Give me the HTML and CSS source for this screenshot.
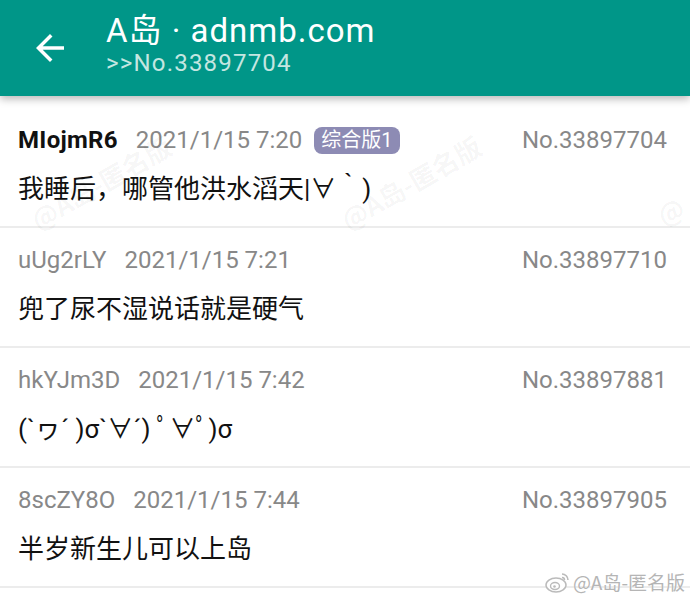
FILE: index.html
```html
<!DOCTYPE html>
<html lang="zh">
<head>
<meta charset="utf-8">
<link rel="stylesheet" href="styles.css">
</head>
<body>
<div class="app">
  <header class="bar">
    <svg class="back" viewBox="0 0 24 24" width="42" height="42"><path fill="#fff" d="M20 11H7.83l5.59-5.59L12 4l-8 8 8 8 1.41-1.41L7.83 13H20v-2z"/></svg>
    <div class="titles">
      <div class="title">A岛 · adnmb.com</div>
      <div class="subtitle">&gt;&gt;No.33897704</div>
    </div>
  </header>
  <main class="list">
    <div class="post">
      <div class="meta">
        <span class="uid po">MIojmR6</span>
        <span class="time">2021/1/15 7:20</span>
        <span class="tag">综合版1</span>
        <span class="no">No.33897704</span>
      </div>
      <div class="content">我睡后，哪管他洪水滔天|∀｀)</div>
    </div>
    <div class="post">
      <div class="meta">
        <span class="uid">uUg2rLY</span>
        <span class="time">2021/1/15 7:21</span>
        <span class="no">No.33897710</span>
      </div>
      <div class="content">兜了尿不湿说话就是硬气</div>
    </div>
    <div class="post">
      <div class="meta">
        <span class="uid">hkYJm3D</span>
        <span class="time">2021/1/15 7:42</span>
        <span class="no">No.33897881</span>
      </div>
      <div class="content">(`ヮ´ )σ`∀´) ﾟ∀ﾟ)σ</div>
    </div>
    <div class="post">
      <div class="meta">
        <span class="uid">8scZY8O</span>
        <span class="time">2021/1/15 7:44</span>
        <span class="no">No.33897905</span>
      </div>
      <div class="content">半岁新生儿可以上岛</div>
    </div>
  </main>
  <span class="wm wm1">@A岛-匿名版</span>
  <span class="wm wm2">@A岛-匿名版</span>
  <span class="wm wm3">@</span>
  <div class="weibo">
    <svg viewBox="0 0 26 22" width="26" height="22"><ellipse cx="11" cy="14" rx="10" ry="7" fill="#fff" stroke="#bbb" stroke-width="1.5"/><ellipse cx="10" cy="15" rx="4.5" ry="3.5" fill="none" stroke="#bbb" stroke-width="1.4"/><circle cx="9.5" cy="15.5" r="1.3" fill="#bbb"/><path d="M17 3a6 6 0 0 1 6 6" fill="none" stroke="#bbb" stroke-width="1.6"/><path d="M17 6.5a2.5 2.5 0 0 1 2.5 2.5" fill="none" stroke="#bbb" stroke-width="1.5"/></svg>
    <span>@A岛-匿名版</span>
  </div>
</div>
</body>
</html>
```
FILE: styles.css
```css
html, body {
  margin: 0;
  padding: 0;
  background: #ffffff;
}
body {
  font-family: Roboto, "Noto Sans CJK SC", sans-serif;
  width: 690px;
  height: 601px;
  overflow: hidden;
}
.app {
  position: relative;
  width: 690px;
  height: 601px;
  overflow: hidden;
  background: #fff;
}
.bar {
  position: relative;
  z-index: 2;
  height: 96px;
  background: #009688;
  display: flex;
  align-items: center;
  box-shadow: 0 3px 8px rgba(0, 0, 0, 0.28);
}
.back {
  margin-left: 29px;
  margin-right: 35px;
  margin-top: 0;
}
.titles {
  display: flex;
  flex-direction: column;
  margin-top: -6px;
}
.title {
  color: #fff;
  font-size: 33px;
  line-height: 36px;
  letter-spacing: 1px;
}
.subtitle {
  color: #c4e6e1;
  font-size: 24px;
  line-height: 28px;
  letter-spacing: 1.2px;
}
.list {
  padding-top: 12px;
}
.post {
  height: 118px;
  border-bottom: 2px solid #ececec;
  padding: 0 23px 0 18px;
  box-sizing: content-box;
}
.meta {
  display: flex;
  align-items: center;
  padding-top: 17px;
  height: 30px;
  font-size: 24px;
  line-height: 30px;
  color: #888;
}
.uid {
  margin-right: 18px;
}
.uid.po {
  color: #111;
  font-weight: bold;
  letter-spacing: 0.3px;
}
.tag {
  margin-left: 12px;
  background: #8d8bb4;
  color: #fff;
  font-size: 20px;
  line-height: 27px;
  height: 27px;
  padding: 0 7px;
  border-radius: 8px;
}
.no {
  margin-left: auto;
}
.content {
  margin-top: 17px;
  font-size: 26px;
  line-height: 34px;
  color: #111;
}
.wm {
  position: absolute;
  font-family: "Noto Sans CJK SC", sans-serif;
  font-weight: bold;
  font-size: 26px;
  color: rgba(0, 0, 0, 0.045);
  transform: rotate(-30deg);
  transform-origin: left bottom;
  white-space: nowrap;
  pointer-events: none;
}
.wm1 { left: 42px; top: 200px; }
.wm2 { left: 352px; top: 200px; }
.wm3 { left: 668px; top: 196px; }
.weibo {
  position: absolute;
  right: 5px;
  bottom: 6px;
  display: flex;
  align-items: center;
  gap: 2px;
  font-family: "Noto Sans CJK SC", sans-serif;
  font-size: 19px;
  color: #b5b5b5;
  text-shadow: 0 0 1px #fff;
}
```
